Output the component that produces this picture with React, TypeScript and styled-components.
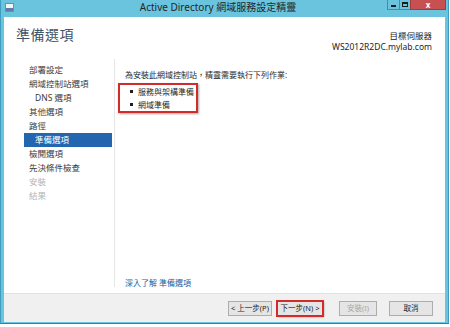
import React from "react";
import styled, { createGlobalStyle } from "styled-components";

const Global = createGlobalStyle`
  html, body { margin: 0; padding: 0; background: #ffffff; }
  body { font-family: "Noto Sans", "Noto Sans CJK TC", sans-serif; }
  * { box-sizing: border-box; }
`;

const Frame = styled.div`
  width: 449px;
  height: 324px;
  background: #6ac4de;
  border-left: 1px solid #3f9ec0;
  border-right: 1px solid #3f9ec0;
  border-bottom: 1px solid #6e6e6e;
  display: flex;
  flex-direction: column;
  padding: 0 3px 1px 3px;
`;

const TitleBar = styled.div`
  height: 17px;
  display: flex;
  align-items: flex-start;
`;

const AppIcon = styled.div`
  width: 9px;
  height: 9px;
  margin: 3px 0 0 1px;
  background: linear-gradient(#f4f4f4 0 55%, #5b7da8 55% 100%);
  border: 1px solid #6d8db3;
`;

const TitleText = styled.div`
  flex: 1;
  text-align: center;
  font-size: 10px;
  line-height: 15px;
  color: #262626;
  padding-left: 34px;
  white-space: nowrap;
`;

const Controls = styled.div`
  display: flex;
  margin-right: -1px;
`;

const CtrlBtn = styled.div<{ $w: number; $close?: boolean }>`
  width: ${(p) => p.$w}px;
  height: 10px;
  background: ${(p) => (p.$close ? "#c75050" : "#6ac4de")};
  border: 1px solid ${(p) => (p.$close ? "#a03c3c" : "#3d8fae")};
  border-top: none;
  margin-left: -1px;
  display: flex;
  align-items: center;
  justify-content: center;
  color: ${(p) => (p.$close ? "#ffffff" : "#1a1a1a")};
  font-size: 8px;
  font-weight: bold;
  line-height: 1;
`;

const MinGlyph = styled.div`
  width: 5px;
  height: 2px;
  background: #1a1a1a;
  margin-top: 3px;
`;

const MaxGlyph = styled.div`
  width: 6px;
  height: 5px;
  border: 1px solid #1a1a1a;
  border-top-width: 2px;
`;

const Client = styled.div`
  flex: 1;
  background: #ffffff;
  display: flex;
  flex-direction: column;
`;

const Header = styled.div`
  height: 42px;
  display: flex;
  justify-content: space-between;
  padding: 8px 13px 0 12px;
`;

const PageTitle = styled.div`
  font-size: 14px;
  color: #3e5468;
  line-height: 20px;
  letter-spacing: 0.5px;
`;

const Target = styled.div`
  text-align: right;
  font-size: 8.5px;
  line-height: 11px;
  color: #1e1e1e;
  padding-top: 5px;
  white-space: nowrap;
`;

const Body = styled.div`
  flex: 1;
  display: flex;
`;

const Nav = styled.div`
  width: 111px;
  padding: 4px 0 0 20px;
  border-right: 1px solid #e6e6e6;
  margin-bottom: 6px;
  display: flex;
  flex-direction: column;
`;

const NavItem = styled.div<{ $indent?: boolean; $active?: boolean; $disabled?: boolean }>`
  height: 14px;
  line-height: 14px;
  font-size: 8.5px;
  padding-left: ${(p) => (p.$indent ? 11 : 5)}px;
  color: ${(p) => (p.$active ? "#ffffff" : p.$disabled ? "#b4b4b4" : "#3a3a3a")};
  background: ${(p) => (p.$active ? "#2366b0" : "transparent")};
  margin-right: 2px;
  white-space: nowrap;
`;

const Content = styled.div`
  flex: 1;
  display: flex;
  flex-direction: column;
  padding: 10px 0 4px 10px;
`;

const Intro = styled.div`
  font-size: 8px;
  color: #2a2a2a;
  line-height: 12px;
  white-space: nowrap;
`;

const TaskList = styled.ul`
  list-style: none;
  margin: 2px 0 0 -7px;
  padding: 0 4px 0 10px;
  width: 80px;
  border: 2px solid #d42a2a;
  box-shadow: 1px 1px 2px rgba(0, 0, 0, 0.35);
`;

const Task = styled.li`
  font-size: 8px;
  line-height: 13px;
  color: #2a2a2a;
  display: flex;
  align-items: center;
  gap: 5px;
  white-space: nowrap;
  &::before {
    content: "";
    width: 3px;
    height: 3px;
    background: #1e1e1e;
    flex: none;
  }
`;

const Spacer = styled.div`
  flex: 1;
`;

const Link = styled.div`
  font-size: 8px;
  color: #2a5e9e;
  line-height: 12px;
  white-space: nowrap;
`;

const Footer = styled.div`
  height: 29px;
  background: #f0f0f0;
  border-top: 1px solid #e2e2e2;
  display: flex;
  align-items: center;
  justify-content: flex-end;
  padding: 0 12px 0 0;
`;

const Btn = styled.div<{ $disabled?: boolean; $w?: number; $mark?: boolean; $gap?: number }>`
  width: ${(p) => p.$w ?? 44}px;
  height: 15px;
  margin-left: ${(p) => p.$gap ?? 5}px;
  border: 1px solid ${(p) => (p.$mark ? "#d42a2a" : "#adadad")};
  outline: ${(p) => (p.$mark ? "1px solid #d42a2a" : "none")};
  box-shadow: ${(p) => (p.$mark ? "1px 1px 2px rgba(0,0,0,0.35)" : "none")};
  background: #e5e5e5;
  font-size: 7.5px;
  line-height: 13px;
  text-align: center;
  white-space: nowrap;
  color: ${(p) => (p.$disabled ? "#a8a8a8" : "#1e1e1e")};
`;

export default function App() {
  return (
    <>
      <Global />
      <Frame>
        <TitleBar>
          <AppIcon />
          <TitleText>Active Directory 網域服務設定精靈</TitleText>
          <Controls>
            <CtrlBtn $w={13}>
              <MinGlyph />
            </CtrlBtn>
            <CtrlBtn $w={12}>
              <MaxGlyph />
            </CtrlBtn>
            <CtrlBtn $w={36} $close>
              x
            </CtrlBtn>
          </Controls>
        </TitleBar>
        <Client>
          <Header>
            <PageTitle>準備選項</PageTitle>
            <Target>
              <div>目標伺服器</div>
              <div>WS2012R2DC.mylab.com</div>
            </Target>
          </Header>
          <Body>
            <Nav>
              <NavItem>部署設定</NavItem>
              <NavItem>網域控制站選項</NavItem>
              <NavItem $indent>DNS 選項</NavItem>
              <NavItem>其他選項</NavItem>
              <NavItem>路徑</NavItem>
              <NavItem $indent $active>
                準備選項
              </NavItem>
              <NavItem>檢閱選項</NavItem>
              <NavItem>先決條件檢查</NavItem>
              <NavItem $disabled>安裝</NavItem>
              <NavItem $disabled>結果</NavItem>
            </Nav>
            <Content>
              <Intro>為安裝此網域控制站，精靈需要執行下列作業:</Intro>
              <TaskList>
                <Task>服務與架構準備</Task>
                <Task>網域準備</Task>
              </TaskList>
              <Spacer />
              <Link>深入了解 準備選項</Link>
            </Content>
          </Body>
          <Footer>
            <Btn>&lt; 上一步(P)</Btn>
            <Btn $mark $w={46} $gap={5}>
              下一步(N) &gt;
            </Btn>
            <Btn $disabled $w={38} $gap={16}>
              安裝(I)
            </Btn>
            <Btn $gap={12}>取消</Btn>
          </Footer>
        </Client>
      </Frame>
    </>
  );
}
